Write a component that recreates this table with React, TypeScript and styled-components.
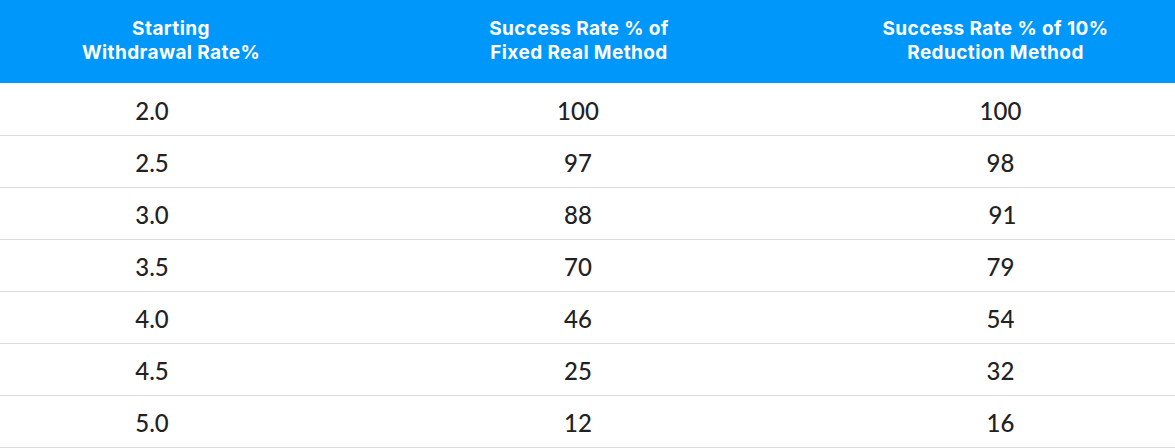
import React from "react";
import styled, { createGlobalStyle } from "styled-components";

const Global = createGlobalStyle`
  html, body { margin: 0; padding: 0; background: #ffffff; }
  body { font-family: "Lato", "Inter", sans-serif; }
`;

const Table = styled.table`
  width: 1175px;
  border-collapse: collapse;
  table-layout: fixed;
`;

const HeadRow = styled.tr`
  background: #0097fb;
  height: 83px;
`;

const HeadCell = styled.th`
  color: #ffffff;
  font-family: "Inter", "Lato", sans-serif;
  font-size: 19px;
  letter-spacing: 0.4px;
  font-weight: 700;
  line-height: 24px;
  text-align: center;
  padding: 0 0 2px 0;
  vertical-align: middle;
`;

const Row = styled.tr`
  height: 52px;
  border-bottom: 1px solid #dcdcdc;
`;

const Cell = styled.td<{ $shift: number }>`
  color: #222222;
  font-size: 24px;
  font-weight: 500;
  text-align: center;
  vertical-align: middle;
  padding: 3px 0 0 0;
  padding-left: ${(p) => (p.$shift > 0 ? p.$shift * 2 : 0)}px;
  padding-right: ${(p) => (p.$shift < 0 ? -p.$shift * 2 : 0)}px;
`;

const headers = [
  ["Starting", "Withdrawal Rate%"],
  ["Success Rate % of", "Fixed Real Method"],
  ["Success Rate % of 10%", "Reduction Method"],
];

const widths = [342, 474, 359];
const shifts = [-19, -1, 5];

const rows: [string, string, string][] = [
  ["2.0", "100", "100"],
  ["2.5", "97", "98"],
  ["3.0", "88", "91"],
  ["3.5", "70", "79"],
  ["4.0", "46", "54"],
  ["4.5", "25", "32"],
  ["5.0", "12", "16"],
];

export default function App() {
  return (
    <>
      <Global />
      <Table>
        <colgroup>
          {widths.map((w, i) => (
            <col key={i} style={{ width: w }} />
          ))}
        </colgroup>
        <thead>
          <HeadRow>
            {headers.map((h, i) => (
              <HeadCell key={i}>
                {h[0]}
                <br />
                {h[1]}
              </HeadCell>
            ))}
          </HeadRow>
        </thead>
        <tbody>
          {rows.map((r, i) => (
            <Row key={i}>
              {r.map((v, j) => (
                <Cell key={j} $shift={shifts[j] + (v === "91" ? 2 : 0)}>
                  {v}
                </Cell>
              ))}
            </Row>
          ))}
        </tbody>
      </Table>
    </>
  );
}
